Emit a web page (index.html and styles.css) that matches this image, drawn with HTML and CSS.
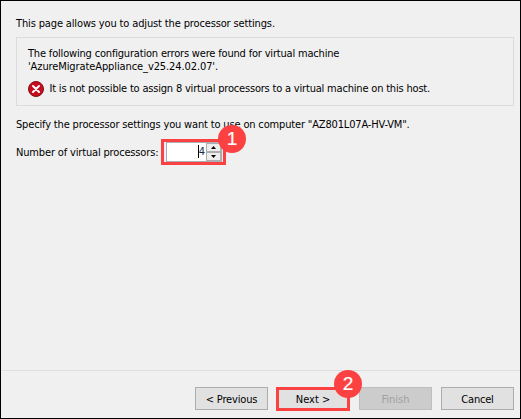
FILE: index.html
```html
<!DOCTYPE html>
<html lang="en">
<head>
<meta charset="utf-8">
<title>Import Virtual Machine</title>
<link rel="stylesheet" href="styles.css">
</head>
<body>
<div class="dialog">
  <main class="content">
    <p class="intro"><span class="t-intro">This page allows you to adjust the processor settings.</span></p>
    <section class="errors">
      <p><span class="t-found">The following configuration errors were found for virtual machine</span><br><span class="t-name">'AzureMigrateAppliance_v25.24.02.07'.</span></p>
      <div class="error">
        <svg class="error-icon" width="16" height="16" viewBox="0 0 16 16"><circle cx="8" cy="8" r="7.5" fill="#c80d1c" stroke="#7f1019"/><path d="M5 5l6 6M11 5l-6 6" stroke="#fff" stroke-width="2" stroke-linecap="round"/></svg>
        <span class="t-error">It is not possible to assign 8 virtual processors to a virtual machine on this host.</span>
      </div>
    </section>
    <p class="specify"><span class="t-specify">Specify the processor settings you want to use on computer "AZ801L07A-HV-VM".</span></p>
    <div class="field">
      <label><span class="t-label">Number of virtual processors:</span></label>
      <div class="highlight">
        <div class="spinner">
          <span class="value">4</span>
          <span class="arrows">
            <span class="arrow"><svg width="5" height="3" viewBox="0 0 5 3"><path d="M0 3L2.5 0L5 3z"/></svg></span>
            <span class="arrow"><svg width="5" height="3" viewBox="0 0 5 3"><path d="M0 0L2.5 3L5 0z"/></svg></span>
          </span>
        </div>
        <span class="badge badge-one">1</span>
      </div>
    </div>
  </main>
  <footer class="footer">
    <div class="button"><span class="t-previous">&lt; Previous</span></div>
    <div class="button next"><span class="t-next">Next &gt;</span><span class="badge badge-two">2</span></div>
    <div class="button disabled"><span class="t-finish">Finish</span></div>
    <div class="button"><span class="t-cancel">Cancel</span></div>
  </footer>
</div>
</body>
</html>
```
FILE: styles.css
```css
* { box-sizing: border-box; }
body { margin: 0; }
p { margin: 0; }
.dialog {
  width: 521px;
  height: 419px;
  display: flex;
  flex-direction: column;
  border: 1px solid #000;
  background: #f0f0f0;
  color: #000;
  font: 11px/13px "DejaVu Sans Condensed", "DejaVu Sans", sans-serif;
  font-stretch: condensed;
  white-space: nowrap;
}
.content { flex: 1; padding: 16px 6px 0 15px; }
.errors {
  height: 69px;
  margin-top: 7px;
  padding: 9px 11px 0;
  border: 1px solid #dcdcdc;
}
.t-intro { letter-spacing: -0.14px; }
.t-found { letter-spacing: -0.18px; }
.t-name { letter-spacing: -0.1px; }
.t-error { padding-top: 1px; letter-spacing: -0.19px; }
.t-specify { letter-spacing: -0.16px; }
.t-label { letter-spacing: -0.16px; }
.t-previous { letter-spacing: -0.15px; }
.t-cancel { letter-spacing: -0.2px; }
.error { display: flex; margin-top: 8px; gap: 5.5px; }
.error-icon { flex: none; }
.specify { margin-top: 12px; }
.field { display: flex; align-items: flex-start; margin-top: 8px; }
.field label { width: 145px; padding-top: 7px; }
.highlight {
  position: relative;
  width: 65px;
  height: 26px;
  padding: 0 1px 0 2px;
  border: 3px solid #fb4141;
}
.spinner {
  display: flex;
  width: 56px;
  height: 20px;
  border: 1px solid #abadb3;
  background: #fff;
}
.value { flex: 1; padding: 2px 1px 0 0; text-align: right; color: #152a4d; }
.value::before {
  content: "";
  display: inline-block;
  width: 1px;
  height: 13px;
  vertical-align: -3px;
  background: #000;
}
.arrows { width: 15px; display: flex; flex-direction: column; }
.arrow {
  flex: 1;
  display: flex;
  align-items: center;
  justify-content: center;
  border: 1px solid #adadad;
  background: #ededed;
}
.badge {
  position: absolute;
  width: 28px;
  height: 28px;
  border-radius: 50%;
  background: #fb4141;
  color: #fff;
  font: 19px/28px "Liberation Sans", Arial, sans-serif;
  -webkit-text-stroke: 0.2px #fff;
  text-align: center;
}
.badge-one { left: 54px; top: -17px; }
.badge-two { left: 55px; top: -20px; }
.footer {
  display: flex;
  height: 48px;
  padding: 16px 6px 0 194px;
  gap: 9px;
  border-top: 1px solid #dfdfdf;
}
.button {
  position: relative;
  width: 73px;
  height: 23px;
  padding-top: 5px;
  border: 1px solid #adadad;
  background: #e1e1e1;
  text-align: center;
}
.next { z-index: 1; width: 74px; height: 24px; margin-left: -1px; padding-top: 3px; border: 3px solid #fb4141; }
.disabled { background: #ccc; border-color: #bfbfbf; color: #a0a0a0; }
```
